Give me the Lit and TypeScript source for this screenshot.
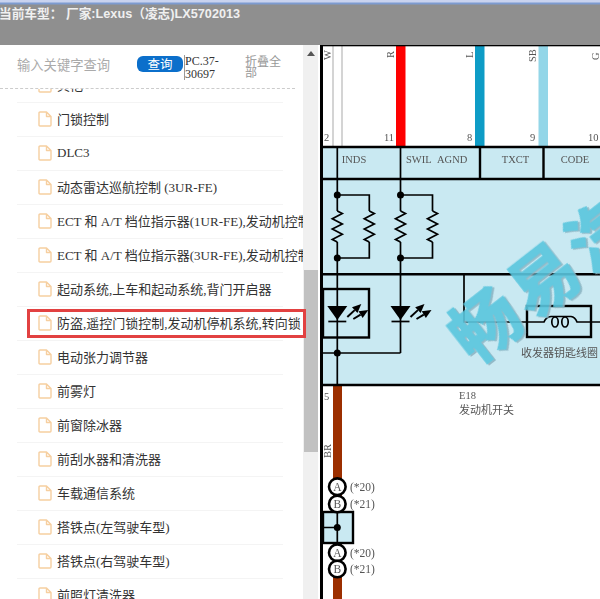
import { LitElement, html, css, svg } from "lit";
import { customElement } from "lit/decorators.js";

const ITEMS = [
  "其他",
  "门锁控制",
  "DLC3",
  "动态雷达巡航控制 (3UR-FE)",
  "ECT 和 A/T 档位指示器(1UR-FE),发动机控制系统",
  "ECT 和 A/T 档位指示器(3UR-FE),发动机控制系统",
  "起动系统,上车和起动系统,背门开启器",
  "防盗,遥控门锁控制,发动机停机系统,转向锁",
  "电动张力调节器",
  "前雾灯",
  "前窗除冰器",
  "前刮水器和清洗器",
  "车载通信系统",
  "搭铁点(左驾驶车型)",
  "搭铁点(右驾驶车型)",
  "前照灯清洗器",
];

const zig = (x: number, y0: number, y1: number) => {
  const n = 6;
  const h = (y1 - y0) / n;
  let d = `M${x} ${y0}`;
  for (let i = 0; i < n; i++) {
    const dx = i % 2 === 0 ? 5 : -5;
    d += ` L${x + dx} ${y0 + h * i + h / 2}`;
  }
  return d + ` L${x} ${y1}`;
};

const arrow = (x0: number, y0: number, x1: number, y1: number) => {
  const a = Math.atan2(y1 - y0, x1 - x0);
  const l = 9;
  const w = 4;
  const bx = x1 - l * Math.cos(a);
  const by = y1 - l * Math.sin(a);
  const nx = -Math.sin(a) * w;
  const ny = Math.cos(a) * w;
  return svg`<line class="w2s" x1=${x0} y1=${y0} x2=${bx} y2=${by}></line>
    <polygon class="ink" points="${x1},${y1} ${bx + nx},${by + ny} ${bx - nx},${by - ny}"></polygon>`;
};

const led = (x: number) => svg`
  <polygon class="ink" points="${x - 10},306 ${x + 10},306 ${x},320"></polygon>
  <line class="w15" x1=${x - 9} y1="321.5" x2=${x + 9} y2="321.5"></line>
  ${arrow(x + 10, 317, x + 24, 304)}
  ${arrow(x + 16, 319, x + 31, 310)}`;

const resistorPair = (x: number) => svg`
  <path class="w15" d="M${x} 195 H${x + 32} V211 M${x + 32} 242 V258 H${x}"></path>
  <path class="w15" d=${zig(x, 211, 242)}></path>
  <path class="w15" d=${zig(x + 32, 211, 242)}></path>
  <circle class="ink" cx=${x} cy="195" r="3.5"></circle>
  <circle class="ink" cx=${x} cy="258" r="3.5"></circle>`;

const bubble = (cy: number, letter: string, note: string) => svg`
  <circle class="ring" cx="337.3" cy=${cy} r="8.3"></circle>
  <text class="lbl big mid" x="337.3" y=${cy + 4}>${letter}</text>
  <text class="lbl big" x="350" y=${cy + 4}>${note}</text>`;

@customElement("app-root")
export class AppRoot extends LitElement {
  static styles = css`
    :host {
      display: block;
      width: 600px;
      height: 599px;
      overflow: hidden;
      background: #fff;
      position: relative;
      font-family: "Liberation Serif", "Noto Sans CJK SC", serif;
    }
    .top {
      height: 45px;
      box-sizing: border-box;
      padding: 6px 0 0 0;
      background: linear-gradient(#c9d3ef 0, #c9d3ef 2px, #7d9bd0 3px, #7d9bd0 4px, #8f8f8f 5px);
      color: #f0f0f0;
      font: bold 12.7px/16px "Liberation Sans", "Noto Sans CJK SC", sans-serif;
      white-space: nowrap;
    }
    .top span { display: block; margin-left: -1px; }
    .main { display: flex; height: 554px; }
    .left { width: 303px; flex: none; display: flex; flex-direction: column; overflow: hidden; }
    .search {
      height: 44px;
      flex: none;
      box-sizing: border-box;
      margin-right: 8px;
      border-bottom: 1px dashed #ccc;
      display: flex;
      align-items: flex-start;
      padding: 10px 0 0 17px;
      font-size: 13px;
    }
    .kw {
      width: 120px;
      flex: none;
      color: #aaa;
      line-height: 20px;
      font-family: "Noto Sans CJK SC", sans-serif;
      font-size: 13.3px;
      white-space: nowrap;
    }
    .btn {
      width: 46px;
      height: 16px;
      flex: none;
      margin-top: 1px;
      border-radius: 6px;
      background: #0b6fcb;
      color: #fff;
      text-align: center;
      font: 12.5px/15px "Noto Sans CJK SC", sans-serif;
    }
    .code {
      width: 62px;
      flex: none;
      box-sizing: border-box;
      font-size: 12px;
      line-height: 12.5px;
      color: #333;
      padding-left: 1px;
    }
    .code span { display: block; width: 44px; border-left: 1px solid #999; }
    .fold {
      width: 37px;
      flex: none;
      color: #999;
      font: 12px/11px "Noto Sans CJK SC", sans-serif;
    }
    .list { flex: 1; overflow: hidden; }
    .rows { margin: -20px 0 0 17px; width: 266px; }
    .row {
      height: 34px;
      box-sizing: border-box;
      border-bottom: 1px solid #f4f4f4;
      display: flex;
      align-items: center;
      gap: 5px;
      padding: 0 0 2px 21px;
      white-space: nowrap;
      color: #333;
      font-size: 13px;
    }
    .row svg { flex: none; width: 14px; height: 16px; }
    .doc { fill: #fff; stroke: #f6cfa0; stroke-width: 1.4; stroke-linejoin: round; }
    .bar { width: 15px; flex: none; background: #f0f0f0; display: flex; flex-direction: column; align-items: center; }
    .tri {
      margin-top: 6px;
      width: 0;
      height: 0;
      border-left: 4px solid transparent;
      border-right: 4px solid transparent;
      border-bottom: 5px solid #555;
    }
    .thumb { width: 14px; height: 182px; margin-top: 214px; background: #c1c1c1; }
    .gap { width: 2px; flex: none; }
    .sheet { width: 280px; height: 554px; flex: none; display: block; filter: blur(0.35px); }
    .mark {
      position: absolute;
      left: 27px;
      top: 309px;
      width: 279px;
      height: 29px;
      box-sizing: border-box;
      border: 3px solid #e24141;
    }
    line, .w15, .w2, .w2s { stroke: #000; fill: none; }
    .w15 { stroke-width: 1.7; }
    .w2s { stroke-width: 2; }
    .w2 { stroke-width: 2.4; }
    .ink { fill: #000; stroke: none; }
    .ring { fill: #fff; stroke: #000; stroke-width: 2.6; }
    text { font-family: "Liberation Serif", "Noto Sans CJK SC", serif; }
    .lbl { fill: #555; font-size: 10.5px; }
    .big { font-size: 11.5px; }
    .mid { text-anchor: middle; }
    .cn { fill: #555; font-size: 11px; font-family: "Noto Sans CJK SC", sans-serif; }
    .wm {
      fill: #5ac6de;
      stroke: #5ac6de;
      stroke-width: 1.5;
      font-size: 68px;
      font-weight: 700;
      letter-spacing: 6px;
      font-family: "Noto Sans CJK SC", sans-serif;
      opacity: 0.9;
      filter: drop-shadow(1.5px 2px 0 #8db6c4);
    }
  `;

  private sheet() {
    return svg`
      <rect x="323" y="148" width="277" height="237" fill="#c9e9f2"></rect>
      <rect x="332.5" y="46" width="1" height="101" fill="#aaa"></rect>
      <rect x="341.5" y="46" width="1" height="101" fill="#aaa"></rect>
      <rect x="396" y="46" width="9.5" height="101" fill="#fe0000"></rect>
      <rect x="475" y="46" width="9.5" height="101" fill="#0e9cc6"></rect>
      <rect x="538.5" y="46" width="9.5" height="101" fill="#93d6e8"></rect>
      <rect x="333" y="385" width="9" height="214" fill="#9c2f00"></rect>

      <text class="lbl" transform="translate(331 60) rotate(-90)">W</text>
      <text class="lbl" transform="translate(394 58) rotate(-90)">R</text>
      <text class="lbl" transform="translate(473 58) rotate(-90)">L</text>
      <text class="lbl" transform="translate(536 62) rotate(-90)">SB</text>
      <text class="lbl" transform="translate(599 60) rotate(-90)">G</text>
      <text class="lbl" transform="translate(331 458) rotate(-90)">BR</text>

      <text class="lbl" x="324" y="141">2</text>
      <text class="lbl" x="384" y="141">11</text>
      <text class="lbl" x="467" y="141">8</text>
      <text class="lbl" x="530" y="141">9</text>
      <text class="lbl" x="588" y="141">10</text>
      <text class="lbl" x="324" y="400">5</text>

      <text class="lbl mid" x="354" y="163">INDS</text>
      <text class="lbl" x="406" y="163">SWIL</text>
      <text class="lbl" x="437" y="163">AGND</text>
      <text class="lbl mid" x="515.5" y="163">TXCT</text>
      <text class="lbl mid" x="575" y="163">CODE</text>

      <rect x="320" y="44.5" width="280" height="1.8" fill="#000"></rect>
      <rect x="320" y="45" width="3" height="554" fill="#000"></rect>

      <path class="w2" d="M323 147 H600 M323 179 H600 M480 147 V179 M543.5 147 V179 M323 274.3 H600 M323 385 H600"></path>
      <path class="w15" d="M337.3 147 V211 M337.3 242 V385 M400.5 147 V211 M400.5 242 V353 M323 353 H400.5 M464 274 V322 H527"></path>
      ${resistorPair(337.3)}
      ${resistorPair(400.5)}
      <rect class="w2" x="323" y="289" width="46" height="48.5"></rect>
      ${led(337.3)}
      ${led(400.5)}
      <circle class="ink" cx="337.3" cy="353" r="3.5"></circle>
      <rect class="w2" x="527" y="306" width="64" height="31"></rect>
      <path class="w15" d="M527 322 H544 Q546 317 551 316.5 H571 Q575 317 577 322 H600"></path>
      <ellipse class="w15" cx="555" cy="322" rx="3.2" ry="5"></ellipse>
      <ellipse class="w15" cx="565" cy="322" rx="3.2" ry="5"></ellipse>
      <text class="cn" x="521" y="357">收发器钥匙线圈</text>

      <text class="lbl" x="459" y="399">E18</text>
      <text class="cn" x="459" y="414">发动机开关</text>

      <rect x="323" y="512" width="30" height="31" fill="#c9e9f2" stroke="#000" stroke-width="2.4"></rect>
      <path class="w15" d="M337.3 512 V543 M323 527.5 H337.3"></path>
      <circle class="ink" cx="337.3" cy="527.5" r="3.5"></circle>
      ${bubble(486.7, "A", "(*20)")}
      ${bubble(504, "B", "(*21)")}
      ${bubble(552.7, "A", "(*20)")}
      ${bubble(569, "B", "(*21)")}

      <text class="wm" transform="translate(474 366) rotate(-38)">畅易汽车</text>
    `;
  }

  render() {
    return html`
      <div class="top"><span>当前车型： 厂家:Lexus（凌志)LX5702013</span></div>
      <div class="main">
        <div class="left">
          <div class="search">
            <div class="kw">输入关键字查询</div>
            <div class="btn">查询</div>
            <div class="code"><span>PC.37-30697</span></div>
            <div class="fold">折叠全部</div>
          </div>
          <div class="list">
            <div class="rows">
              ${ITEMS.map(
                (t) => html`<div class="row">
                  <svg viewBox="0 0 14 16"><path class="doc" d="M1 2 Q1 1 2 1 H8.5 L13 5.5 V14 Q13 15 12 15 H2 Q1 15 1 14 Z M8.5 1 V5.5 H13"></path></svg>
                  <span>${t}</span>
                </div>`
              )}
            </div>
          </div>
        </div>
        <div class="bar"><div class="tri"></div><div class="thumb"></div></div>
        <div class="gap"></div>
        <svg class="sheet" viewBox="320 45 280 554">${this.sheet()}</svg>
      </div>
      <div class="mark"></div>
    `;
  }
}
